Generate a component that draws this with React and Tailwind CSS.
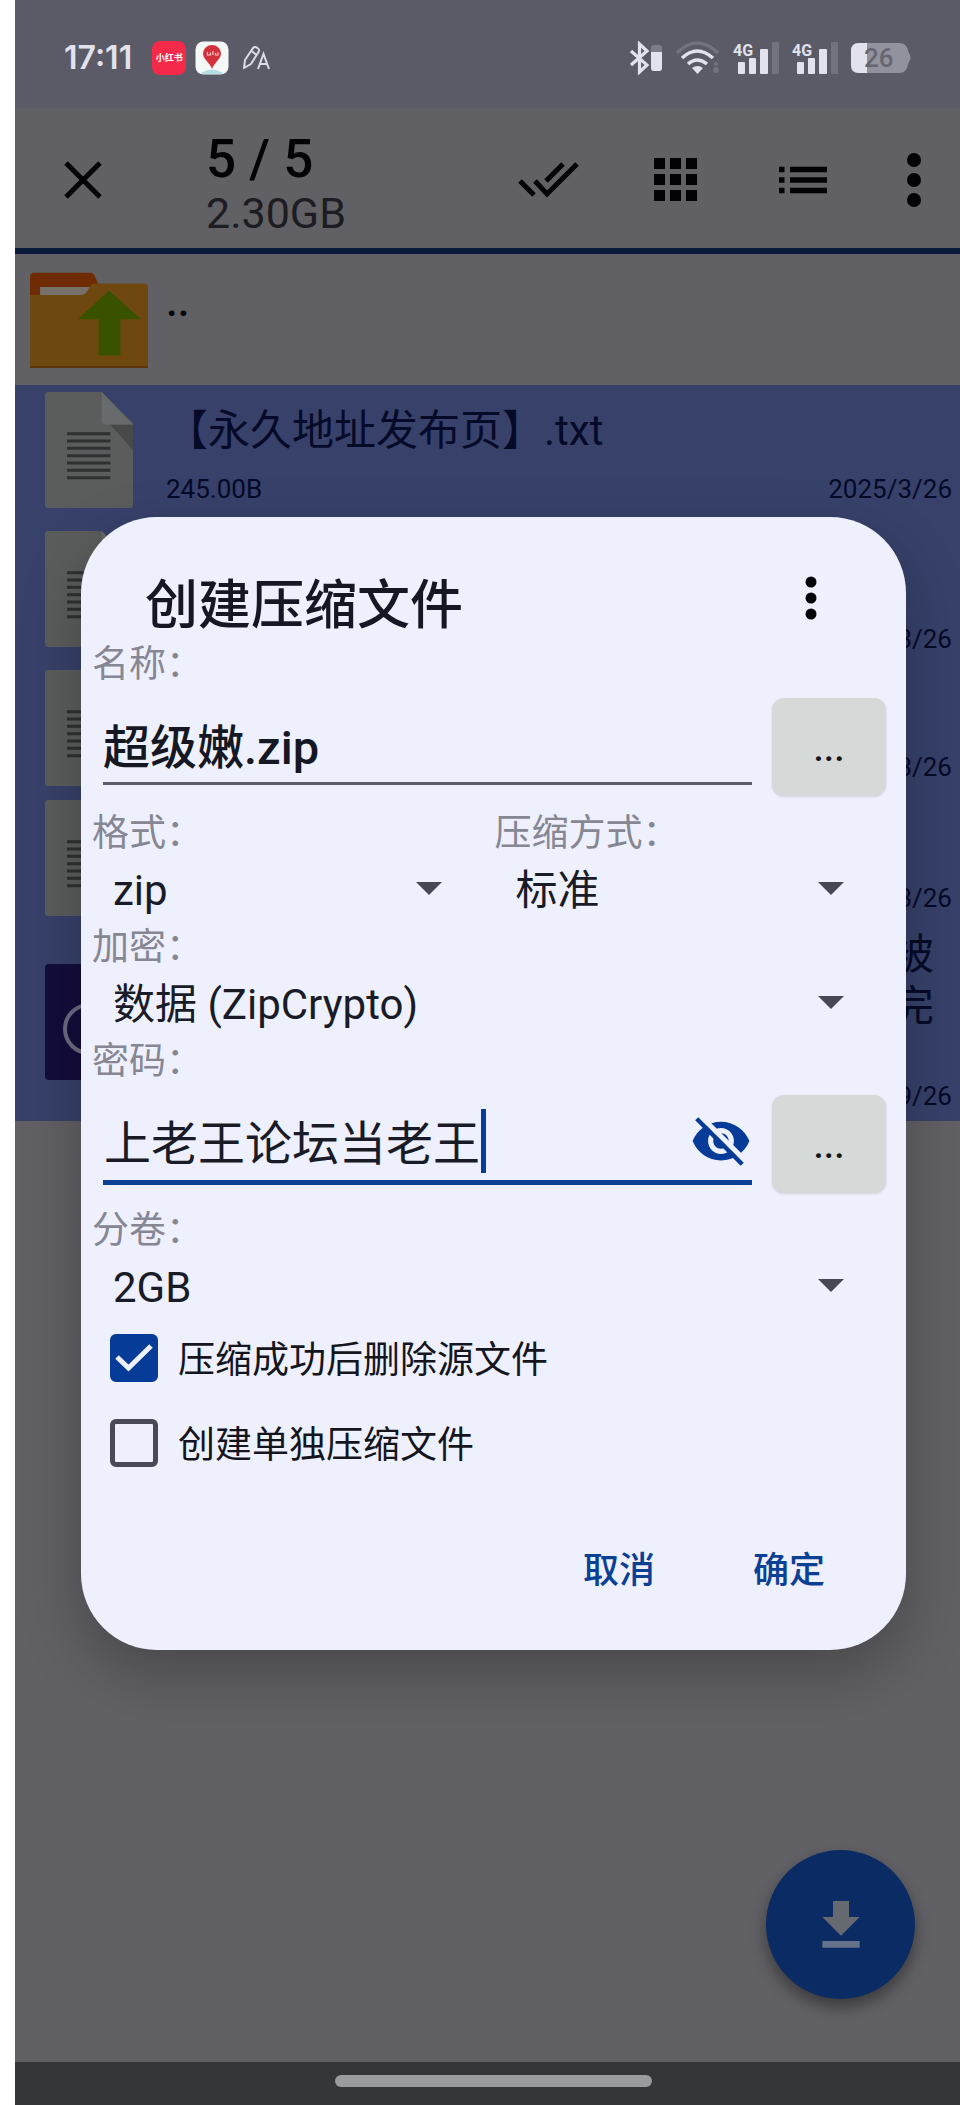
/**
 * Archive creation dialog over a file manager selection screen.
 */
import { useState } from 'react';

const FONT = "font-['Roboto','Noto_Sans_CJK_SC',sans-serif]";

const FILES = [
  { name: '【永久地址发布页】.txt', size: '245.00B', date: '2025/3/26', height: 'h-[129px]', kind: 'text' },
  { name: '', size: '', date: '3/26', height: 'h-[150px]', kind: 'text' },
  { name: '', size: '', date: '3/26', height: 'h-[128px]', kind: 'text' },
  { name: '', size: '', date: '3/26', height: 'h-[131px]', kind: 'text' },
  { name: '被\n完', size: '', date: '9/26', height: 'h-[198px]', kind: 'media', alignEnd: true },
];

// ─── Status bar ───────────────────────────────────────────────────────────────
function SignalIcon() {
  return (
    <svg width="46" height="34" viewBox="0 0 46 34" className="overflow-visible" aria-hidden="true">
      <text x="0" y="15" fontSize="16" fontWeight="700" fill="#e2e2ec" fontFamily="Roboto, sans-serif">4G</text>
      <rect x="5" y="21" width="7" height="12" rx="1" fill="#e2e2ec" />
      <rect x="16" y="17" width="7" height="16" rx="1" fill="#e2e2ec" />
      <rect x="27" y="8" width="8" height="25" rx="1" fill="#e2e2ec" />
      <rect x="39" y="1" width="7" height="32" rx="1" fill="#73737f" />
    </svg>
  );
}

function StatusBar() {
  return (
    <header className="flex h-[108px] items-center bg-[#5b5b67] pt-2 pr-[49px] pl-[49px]">
      <span className="font-['Inter',sans-serif] text-[32px] leading-none font-semibold text-[#e2e2ec]">17:11</span>
      <div className="ml-[20px] flex items-center gap-[9px]">
        <span className="flex size-[34px] items-center justify-center rounded-lg bg-[#f5294a] text-[9px] leading-none font-bold whitespace-nowrap text-white">
          小红书
        </span>
        <svg width="34" height="34" viewBox="0 0 34 34" aria-hidden="true">
          <rect x="0.5" y="0.5" width="33" height="33" rx="8" fill="#f4f8f6" />
          <path d="M5 33 Q17 24 29 33 Z" fill="#b5dde6" />
          <path d="M17 28 C15 22 8 18 8 12.500 A9 8.500 0 0 1 26 12.500 C26 18 19 22 17 28Z" fill="#d3323c" />
          <path d="M12.500 11v3h3v-2.500M18 10v4M20.500 12v2h2.500v-2.500" fill="none" stroke="#f6c9cc" strokeWidth="1.200" />
        </svg>
        <svg className="ml-1" width="28" height="28" viewBox="0 0 28 28" fill="none" stroke="#dcdce6" strokeWidth="2" aria-hidden="true">
          <path d="M2 24 3 16 11 4 Q13 2 15.500 4 Q18 5.500 16.500 8 L9 20Z M9.500 7 14 10.500" strokeLinejoin="round" />
          <path d="M16 25 21.500 10 27 25 M18 20h7" />
        </svg>
      </div>
      <div className="ml-auto flex items-center gap-[13px]">
        <svg width="34" height="34" viewBox="0 0 34 34" aria-hidden="true">
          <path d="M2 10 18 24 10.500 31V3L18 10 2 24" fill="none" stroke="#e2e2ec" strokeWidth="3.200" />
          <rect x="22" y="4" width="11" height="26" rx="3" fill="#7d7d89" />
          <path d="M22 11h11v16q0 3-3 3h-5q-3 0-3-3z" fill="#e2e2ec" />
        </svg>
        <svg width="44" height="34" viewBox="0 0 44 34" fill="none" aria-hidden="true">
          <path d="M1 12 Q21 -8 42 12" stroke="#73737f" strokeWidth="3.500" />
          <path d="M6 17 Q21 3 37 17" stroke="#e2e2ec" strokeWidth="3.500" />
          <path d="M12 23 Q21 15 31 23" stroke="#e2e2ec" strokeWidth="3.500" />
          <path d="M21.500 33 16 27 Q21.500 23 27 27Z" fill="#e2e2ec" />
          <circle cx="40" cy="23" r="2" fill="#73737f" />
          <circle cx="40" cy="29" r="3" fill="#73737f" />
        </svg>
        <SignalIcon />
        <SignalIcon />
        <svg width="60" height="32" viewBox="0 0 60 32" aria-hidden="true">
          <path d="M8 1h40q8 0 9 8l2 4q1 3 0 5l-2 4q-1 9-9 9H8q-8 0-8-8V9q0-8 8-8z" fill="#92929e" />
          <path d="M8 1h8v30H8q-8 0-8-8V9q0-8 8-8z" fill="#e2e2ec" />
          <text x="13" y="25" fontSize="26" fontWeight="500" fill="#666672" fontFamily="Roboto, sans-serif">26</text>
        </svg>
      </div>
    </header>
  );
}

// ─── Selection toolbar ────────────────────────────────────────────────────────
function Toolbar() {
  return (
    <div className="flex h-[146px] items-center border-b-[6px] border-[#0a1a3a] bg-[#616064] pt-1 pr-[39px] pl-[49px] text-[#020207]">
      <button type="button" aria-label="关闭">
        <svg width="38" height="38" viewBox="0 0 38 38" stroke="currentColor" strokeWidth="5">
          <path d="M2 2 36 36M36 2 2 36" />
        </svg>
      </button>
      <div className="ml-[104px] flex flex-col pt-3">
        <span className="text-[53px] leading-[54px] font-medium">5 / 5</span>
        <span className="text-[43px] leading-[54px] text-[#1c1c22]">2.30GB</span>
      </div>
      <div className="ml-auto flex items-center">
        <button type="button" aria-label="全选">
          <svg width="62" height="38" viewBox="0 0 62 38" fill="none" stroke="currentColor" strokeWidth="5">
            <path d="M2 20 16 34M17 20 29 33 59 3M28 20 45 3" />
          </svg>
        </button>
        <button type="button" aria-label="网格" className="ml-[74px]">
          <svg width="44" height="44" viewBox="0 0 44 44" fill="currentColor">
            {[0, 16, 32].map((y) =>
              [0, 16, 32].map((x) => <rect key={`${x}-${y}`} x={x} y={y} width="11" height="11" />),
            )}
          </svg>
        </button>
        <button type="button" aria-label="列表" className="ml-[81px]">
          <svg width="48" height="28" viewBox="0 0 48 28" stroke="currentColor" strokeWidth="5.500">
            <path d="M0 3.500h5.500M11 3.500h37M0 14h5.500M11 14h37M0 24.500h5.500M11 24.500h37" />
          </svg>
        </button>
        <button type="button" aria-label="更多" className="ml-[80px]">
          <svg width="14" height="54" viewBox="0 0 14 54" fill="currentColor">
            <circle cx="7" cy="7" r="7" />
            <circle cx="7" cy="27" r="7" />
            <circle cx="7" cy="47" r="7" />
          </svg>
        </button>
      </div>
    </div>
  );
}

// ─── File list ────────────────────────────────────────────────────────────────
function TextFileIcon() {
  return (
    <svg width="88" height="116" viewBox="0 0 264 348" aria-hidden="true">
      <path d="M10 0H170L264 94V338q0 10-10 10H10q-10 0-10-10V10Q0 0 10 0z" fill="#5b5c5c" />
      <path d="M170 0V84q0 14 14 14h80z" fill="#686b6b" />
      <path d="M196 98h68v76z" fill="#484949" />
      <path
        d="M66 125H196M66 147H196M66 169H196M66 191H196M66 213H196M66 235H196M66 257H196"
        stroke="#2e3031"
        strokeWidth="9"
      />
    </svg>
  );
}

function MediaFileIcon() {
  return (
    <svg width="88" height="116" viewBox="0 0 88 116" aria-hidden="true">
      <rect width="88" height="116" rx="4" fill="#130d3b" />
      <circle cx="44" cy="65" r="24" fill="none" stroke="#6d6b83" strokeWidth="4" />
    </svg>
  );
}

function FileRow({ file }) {
  return (
    <li className={`flex items-center bg-[#37416a] pl-[30px] text-[#050a28] ${file.height}`}>
      {file.kind === 'text' ? <TextFileIcon /> : <MediaFileIcon />}
      <div className="ml-[33px] flex h-full flex-1 flex-col justify-between pr-2 pb-[9px]">
        <span className={`pt-5 text-[42px] leading-[52px] whitespace-pre-line ${file.alignEnd ? '-mt-[14px] pr-[18px] text-right' : ''}`}>
          {file.name}
        </span>
        <div className="flex justify-between text-[26px] leading-8">
          <span>{file.size}</span>
          <span>{file.date}</span>
        </div>
      </div>
    </li>
  );
}

function FileList() {
  return (
    <ul className="flex-1">
      <li className="flex h-[131px] items-center pl-[15px]">
        <svg width="118" height="96" viewBox="0 0 351 285" aria-hidden="true">
          <path d="M12 2H180q8 0 12 8l18 40V80H0V14Q0 2 12 2z" fill="#6f2b04" />
          <path d="M30 44H180V75H30z" fill="#77716a" />
          <path d="M0 68H150q16 0 22-14l4-8q6-12 20-12H339q12 0 12 12V285H0z" fill="#6f480f" />
          <path d="M0 279H351V285H0z" fill="#5d350b" />
          <path d="M235 55 330 140H269V248H204V140H142z" fill="#395200" />
        </svg>
        <span className="ml-[18px] pb-9 text-[42px] leading-none font-medium text-[#020207]">..</span>
      </li>
      {FILES.map((file, i) => (
        <FileRow key={i} file={file} />
      ))}
    </ul>
  );
}

// ─── Dialog fields ────────────────────────────────────────────────────────────
function FieldLabel({ htmlFor, children }) {
  return (
    <label htmlFor={htmlFor} className="block pt-[6px] pl-px text-[37px] leading-9 text-[#868793]">
      {children}
    </label>
  );
}

function SelectField({ id, label, options }) {
  return (
    <div>
      <FieldLabel htmlFor={id}>{label}</FieldLabel>
      <div className="grid items-center">
        <select
          id={id}
          className="col-start-1 row-start-1 h-[72px] w-full appearance-none bg-transparent pt-1 pl-[22px] text-[42px] text-[#191b27] outline-none"
        >
          {options.map((option) => (
            <option key={option}>{option}</option>
          ))}
        </select>
        <svg
          className="pointer-events-none col-start-1 row-start-1 mr-[52px] justify-self-end"
          width="26"
          height="13"
          viewBox="0 0 26 13"
          fill="#464854"
          aria-hidden="true"
        >
          <path d="M0 0H26L13 13z" />
        </svg>
      </div>
    </div>
  );
}

function BrowseButton({ label }) {
  return (
    <button
      type="button"
      aria-label={label}
      className="ml-5 h-[98px] w-[114px] rounded-xl bg-[#d5d9d7] pt-1 text-[37px] font-medium text-[#15161c] shadow-sm"
    >
      ...
    </button>
  );
}

function EyeOffIcon() {
  return (
    <svg width="62" height="62" viewBox="0 0 24 24" aria-hidden="true">
      <mask id="eye-cut">
        <rect width="24" height="24" fill="#fff" />
        <path d="M3.600 1.900 22 20.300" stroke="#000" strokeWidth="2" />
      </mask>
      <path
        mask="url(#eye-cut)"
        fill="#063b98"
        d="M12 4.500C7 4.500 2.730 7.610 1 12c1.730 4.390 6 7.500 11 7.500s9.270-3.110 11-7.500c-1.730-4.390-6-7.500-11-7.500zM12 17c-2.760 0-5-2.240-5-5s2.240-5 5-5 5 2.240 5 5-2.240 5-5 5zm0-8c-1.660 0-3 1.340-3 3s1.340 3 3 3 3-1.340 3-3-1.340-3-3-3z"
      />
      <path d="M2.600 3.400 20.200 21" stroke="#063b98" strokeWidth="1.700" />
    </svg>
  );
}

function CheckField({ checked, onChange, children }) {
  return (
    <label className="flex h-[74px] items-center pl-[19px] text-[37px] text-[#14151d]">
      <span className="grid place-items-center">
        <input
          type="checkbox"
          checked={checked}
          onChange={onChange}
          className="col-start-1 row-start-1 size-12 appearance-none rounded-md border-[5px] border-[#484a57] checked:border-[#063b98] checked:bg-[#063b98]"
        />
        {checked && (
          <svg
            className="pointer-events-none col-start-1 row-start-1"
            width="38"
            height="28"
            viewBox="0 0 38 28"
            fill="none"
            stroke="#eef0fd"
            strokeWidth="5"
            aria-hidden="true"
          >
            <path d="M2 13 13.500 24 36 2" />
          </svg>
        )}
      </span>
      <span className="ml-5 pt-[6px]">{children}</span>
    </label>
  );
}

// ─── Dialog ───────────────────────────────────────────────────────────────────
function ArchiveDialog() {
  const [name, setName] = useState('超级嫩.zip');
  const [password, setPassword] = useState('上老王论坛当老王');
  const [deleteSource, setDeleteSource] = useState(true);
  const [separate, setSeparate] = useState(false);

  return (
    <div
      role="dialog"
      aria-labelledby="dialog-title"
      className="w-full rounded-[76px] bg-[#eef0fd] px-[10px] pb-9 shadow-[0_24px_60px_rgba(0,0,0,0.25)]"
    >
      <div className="flex items-center justify-between pt-[54px] pr-[79px] pl-[54px]">
        <h1 id="dialog-title" className="text-[53px] leading-[70px] font-medium text-[#151723]">
          创建压缩文件
        </h1>
        <button type="button" aria-label="更多" className="pb-4">
          <svg width="12" height="44" viewBox="0 0 12 44" fill="#020207">
            <circle cx="6" cy="6" r="5.500" />
            <circle cx="6" cy="22" r="5.500" />
            <circle cx="6" cy="38" r="5.500" />
          </svg>
        </button>
      </div>

      <FieldLabel htmlFor="name">名称：</FieldLabel>
      <div className="flex h-[127px] items-center pr-[10px] pl-3">
        <input
          id="name"
          value={name}
          onChange={(e) => setName(e.target.value)}
          className="h-[77px] min-w-0 flex-1 border-b-[3px] border-[#5c5e6a] bg-transparent pb-1 text-[47px] font-medium text-[#151723] outline-none"
        />
        <BrowseButton label="选择名称" />
      </div>

      <div className="grid grid-cols-2">
        <SelectField id="format" label="格式：" options={['zip', '7z']} />
        <SelectField id="method" label="压缩方式：" options={['标准', '存储']} />
      </div>
      <SelectField id="encryption" label="加密：" options={['数据 (ZipCrypto)']} />

      <FieldLabel htmlFor="password">密码：</FieldLabel>
      <div className="flex h-[127px] items-center pr-[10px] pl-3">
        <div className="flex h-[82px] min-w-0 flex-1 items-center border-b-[5px] border-[#0b4094]">
          <input
            id="password"
            value={password}
            onChange={(e) => setPassword(e.target.value)}
            className="field-sizing-content h-full bg-transparent pb-1 pl-px text-[47px] text-[#191b27] outline-none"
          />
          <span className="ml-px h-16 w-[5px] bg-[#063b98]" />
          <button type="button" aria-label="隐藏密码" className="ml-auto">
            <EyeOffIcon />
          </button>
        </div>
        <BrowseButton label="选择密码" />
      </div>

      <SelectField id="volume" label="分卷：" options={['2GB', '4GB']} />

      <div className="flex flex-col gap-[11px]">
        <CheckField checked={deleteSource} onChange={() => setDeleteSource(!deleteSource)}>
          压缩成功后删除源文件
        </CheckField>
        <CheckField checked={separate} onChange={() => setSeparate(!separate)}>
          创建单独压缩文件
        </CheckField>
      </div>

      <div className="mt-11 flex justify-end gap-9 pr-10 text-[36px] font-medium text-[#0b4094]">
        <button type="button" className="h-[90px] px-[31px] pt-1">取消</button>
        <button type="button" className="h-[90px] px-[31px] pt-1">确定</button>
      </div>
    </div>
  );
}

export default function App() {
  return (
    <div className={`min-h-screen bg-white pl-[15px] ${FONT}`}>
      <div className="relative flex min-h-screen flex-col overflow-hidden bg-[#616165]">
        <StatusBar />
        <Toolbar />
        <FileList />
        <footer className="flex h-[43px] items-center justify-center bg-[#35363a] pb-[6px] pl-3">
          <span className="h-3 w-[34%] rounded-full bg-[#999b9f]" />
        </footer>

        <button
          type="button"
          aria-label="解压"
          className="absolute right-[45px] bottom-[106px] flex size-[149px] items-center justify-center rounded-full bg-[#0b2b64] shadow-[0_8px_16px_rgba(0,0,0,0.4)]"
        >
          <svg width="64" height="64" viewBox="0 0 24 24" aria-hidden="true">
            <path d="M19 9h-4V3H9v6H5l7 7 7-7z" fill="#666a70" />
            <path d="M5 18v2.500h14V18z" fill="#66718a" />
          </svg>
        </button>

        <div className="absolute inset-0 pt-[517px] pr-[54px] pl-[66px]">
          <ArchiveDialog />
        </div>
      </div>
    </div>
  );
}
